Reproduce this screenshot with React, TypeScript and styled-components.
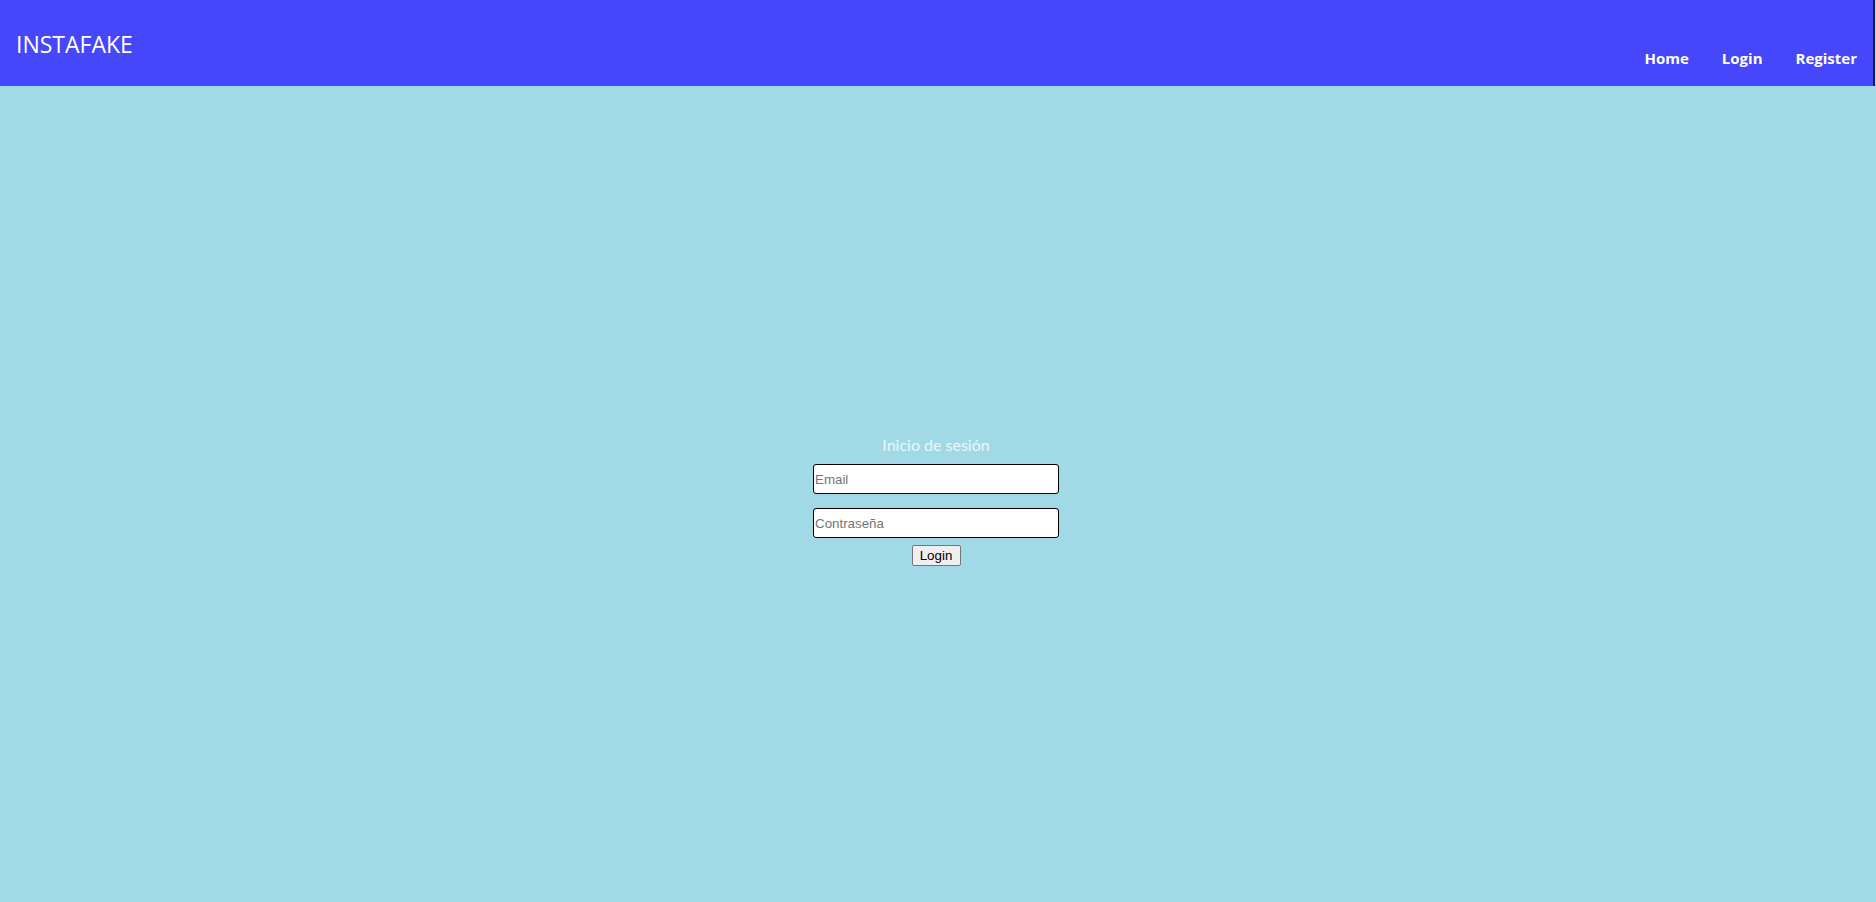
import React from "react";
import styled, { createGlobalStyle } from "styled-components";

const Global = createGlobalStyle`
  html, body { margin: 0; padding: 0; }
  body { background: #a2d9e6; font-family: "Open Sans", "Noto Sans", sans-serif; overflow: hidden; }
`;

const Page = styled.div`
  display: flex;
  flex-direction: column;
  height: 902px;
  background: #a2d9e6;
`;

const Header = styled.header`
  height: 86px;
  box-sizing: border-box;
  background: #4646fa;
  margin-right: 1px;
  border-right: 2px solid #1e1e3c;
  display: flex;
  justify-content: space-between;
  align-items: flex-start;
`;

const Brand = styled.div`
  color: #ffffff;
  font-family: "Open Sans", sans-serif;
  font-size: 23px;
  padding: 29px 0 0 16px;
  line-height: 30px;
`;

const Nav = styled.nav`
  display: flex;
  padding: 47px 0 0 0;
`;

const NavLink = styled.a`
  color: #ffffff;
  font-family: "Open Sans", sans-serif;
  font-weight: 700;
  font-size: 15px;
  line-height: 22px;
  padding: 0 16.5px;
  text-decoration: none;
  &:last-child { padding-right: 16px; }
`;

const Main = styled.main`
  flex: 1;
  display: flex;
  align-items: center;
  justify-content: center;
  padding-top: 12px;
`;

const Form = styled.form`
  display: flex;
  flex-direction: column;
  align-items: center;
  margin-right: 4px;
`;

const Title = styled.div`
  color: #eaf7fa;
  font-family: Lato, sans-serif;
  font-size: 16px;
  line-height: 22px;
  margin-bottom: 8px;
`;

const Input = styled.input<{ $mb: number }>`
  box-sizing: border-box;
  width: 246px;
  height: 30px;
  border: 1.5px solid #000;
  border-radius: 3px;
  background: #fff;
  padding: 0 1px;
  font-family: "Liberation Sans", Arial, sans-serif;
  font-size: 13.33px;
  margin-bottom: ${(p) => p.$mb}px;
  &::placeholder { color: #757575; }
`;

const Button = styled.button`
  box-sizing: border-box;
  width: 49px;
  height: 21px;
  padding: 0;
  background: #efefef;
  border: 1px solid #767676;
  border-radius: 2px;
  font-family: "Liberation Sans", Arial, sans-serif;
  font-size: 13.33px;
  color: #000;
`;

export default function App() {
  return (
    <>
      <Global />
      <Page>
        <Header>
          <Brand>INSTAFAKE</Brand>
          <Nav>
            <NavLink href="#">Home</NavLink>
            <NavLink href="#">Login</NavLink>
            <NavLink href="#">Register</NavLink>
          </Nav>
        </Header>
        <Main>
          <Form onSubmit={(e) => e.preventDefault()}>
            <Title>Inicio de sesión</Title>
            <Input $mb={14} type="email" placeholder="Email" />
            <Input $mb={7} type="password" placeholder="Contraseña" />
            <Button type="submit">Login</Button>
          </Form>
        </Main>
      </Page>
    </>
  );
}
